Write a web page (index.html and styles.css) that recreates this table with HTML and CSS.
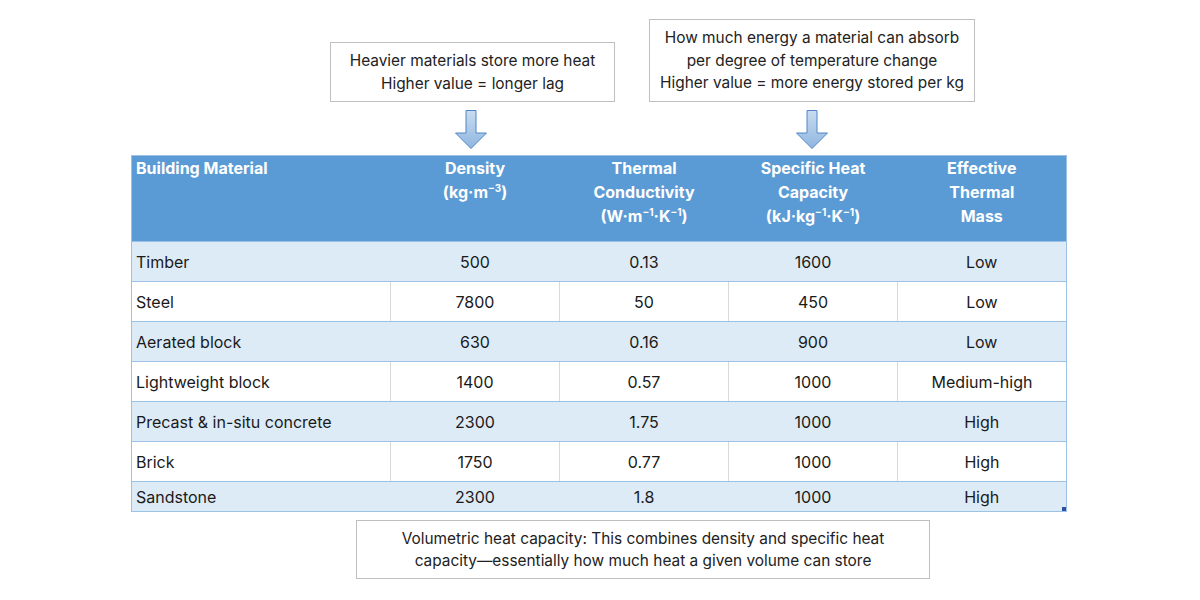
FILE: index.html
```html
<!DOCTYPE html>
<html>
<head>
<meta charset="utf-8">
<link rel="stylesheet" href="styles.css">
</head>
<body>
<div class="page">
  <div class="callouts">
    <div class="callout-col col-a">
      <div class="note note-a">Heavier materials store more heat<br>Higher value = longer lag</div>
      <svg class="arrow" width="34" height="40" viewBox="0 0 34 40">
        <defs>
          <linearGradient id="ag1" x1="0" y1="0" x2="0" y2="1">
            <stop offset="0" stop-color="#c9dcf0"/>
            <stop offset="1" stop-color="#8fb6e0"/>
          </linearGradient>
        </defs>
        <path d="M12 0.5 H22 V23 H32.5 L17 38.5 L1.5 23 H12 Z" fill="url(#ag1)" stroke="#4f86c6" stroke-width="1"/>
      </svg>
    </div>
    <div class="callout-col col-b">
      <div class="note note-b">How much energy a material can absorb<br>per degree of temperature change<br>Higher value = more energy stored per kg</div>
      <svg class="arrow" width="34" height="40" viewBox="0 0 34 40">
        <defs>
          <linearGradient id="ag2" x1="0" y1="0" x2="0" y2="1">
            <stop offset="0" stop-color="#c9dcf0"/>
            <stop offset="1" stop-color="#8fb6e0"/>
          </linearGradient>
        </defs>
        <path d="M12 0.5 H22 V23 H32.5 L17 38.5 L1.5 23 H12 Z" fill="url(#ag2)" stroke="#4f86c6" stroke-width="1"/>
      </svg>
    </div>
  </div>

  <div class="table-wrap">
    <table class="data">
      <colgroup>
        <col class="c1"><col class="cn"><col class="cn"><col class="cn"><col class="cn">
      </colgroup>
      <thead>
        <tr>
          <th class="left">Building Material</th>
          <th>Density<br>(kg·m<sup>−3</sup>)</th>
          <th>Thermal<br>Conductivity<br>(W·m<sup>−1</sup>·K<sup>−1</sup>)</th>
          <th>Specific Heat<br>Capacity<br>(kJ·kg<sup>−1</sup>·K<sup>−1</sup>)</th>
          <th>Effective<br>Thermal<br>Mass</th>
        </tr>
      </thead>
      <tbody>
        <tr class="band"><td class="left">Timber</td><td>500</td><td>0.13</td><td>1600</td><td>Low</td></tr>
        <tr class="plain"><td class="left">Steel</td><td>7800</td><td>50</td><td>450</td><td>Low</td></tr>
        <tr class="band"><td class="left">Aerated block</td><td>630</td><td>0.16</td><td>900</td><td>Low</td></tr>
        <tr class="plain"><td class="left">Lightweight block</td><td>1400</td><td>0.57</td><td>1000</td><td>Medium-high</td></tr>
        <tr class="band"><td class="left">Precast &amp; in-situ concrete</td><td>2300</td><td>1.75</td><td>1000</td><td>High</td></tr>
        <tr class="plain"><td class="left">Brick</td><td>1750</td><td>0.77</td><td>1000</td><td>High</td></tr>
        <tr class="band last"><td class="left">Sandstone</td><td>2300</td><td>1.8</td><td>1000</td><td>High</td></tr>
      </tbody>
    </table>
    <span class="handle"></span>
  </div>

  <div class="note note-c">Volumetric heat capacity: This combines density and specific heat<br>capacity—essentially how much heat a given volume can store</div>
</div>
</body>
</html>
```

FILE: styles.css
```css
html, body {
  margin: 0;
  padding: 0;
  background: #ffffff;
}

body {
  font-family: Inter, "Liberation Sans", Arial, sans-serif;
  color: #1c1c1c;
}

.page {
  width: 1200px;
  height: 600px;
  display: flex;
  flex-direction: column;
}

.callouts {
  display: flex;
  align-items: flex-end;
  height: 150px;
  padding-left: 330px;
  gap: 34px;
  box-sizing: border-box;
}

.callout-col {
  display: flex;
  flex-direction: column;
  align-items: center;
  gap: 8px;
}

.arrow {
  display: block;
}

.col-a .arrow {
  margin-left: -4px;
}

.col-b .arrow {
  margin-left: -1px;
}

.note {
  border: 1px solid #bfbfbf;
  background: #ffffff;
  text-align: center;
  font-size: 15.4px;
  color: #222222;
  box-sizing: border-box;
  white-space: nowrap;
}

.note-a {
  width: 285px;
  height: 60px;
  line-height: 23px;
  padding-top: 6px;
}

.note-b {
  width: 326px;
  height: 83px;
  line-height: 22.5px;
  padding-top: 7px;
}

.note-c {
  width: 574px;
  height: 59px;
  line-height: 22px;
  padding-top: 7px;
  margin-left: 356px;
  margin-top: 8px;
}

.table-wrap {
  position: relative;
  margin-top: 5px;
  margin-left: 131px;
  width: 936px;
}

.data {
  border-collapse: collapse;
  table-layout: fixed;
  width: 936px;
  font-size: 16px;
  border: 1px solid #9cc3e6;
}

.c1 { width: 259px; }
.cn { width: 169px; }

.data th {
  background: #5b9bd5;
  color: #ffffff;
  font-weight: bold;
  text-align: center;
  vertical-align: top;
  line-height: 24px;
  height: 86px;
  padding: 0 4px;
  box-sizing: border-box;
  border-bottom: 1px solid #9cc3e6;
}

.data th.left {
  text-align: left;
}

.data sup {
  font-size: 10px;
  line-height: 0;
  vertical-align: 6px;
}

.data td {
  height: 40px;
  padding: 1px 4px 0 4px;
  text-align: center;
  vertical-align: middle;
  border-bottom: 1px solid #9cc3e6;
  box-sizing: border-box;
  color: #1a1a1a;
}

.data td.left {
  text-align: left;
}

.data tr.band td {
  background: #ddebf7;
}

.data tr.plain td {
  background: #ffffff;
  border-left: 1px solid #d9d9d9;
}

.data tr.plain td:first-child {
  border-left: 1px solid #9cc3e6;
}

.data tr.last td {
  height: 30px;
  padding-bottom: 0;
}

.handle {
  position: absolute;
  right: 1px;
  bottom: 1px;
  width: 4px;
  height: 4px;
  background: #2f4fa0;
}
```
